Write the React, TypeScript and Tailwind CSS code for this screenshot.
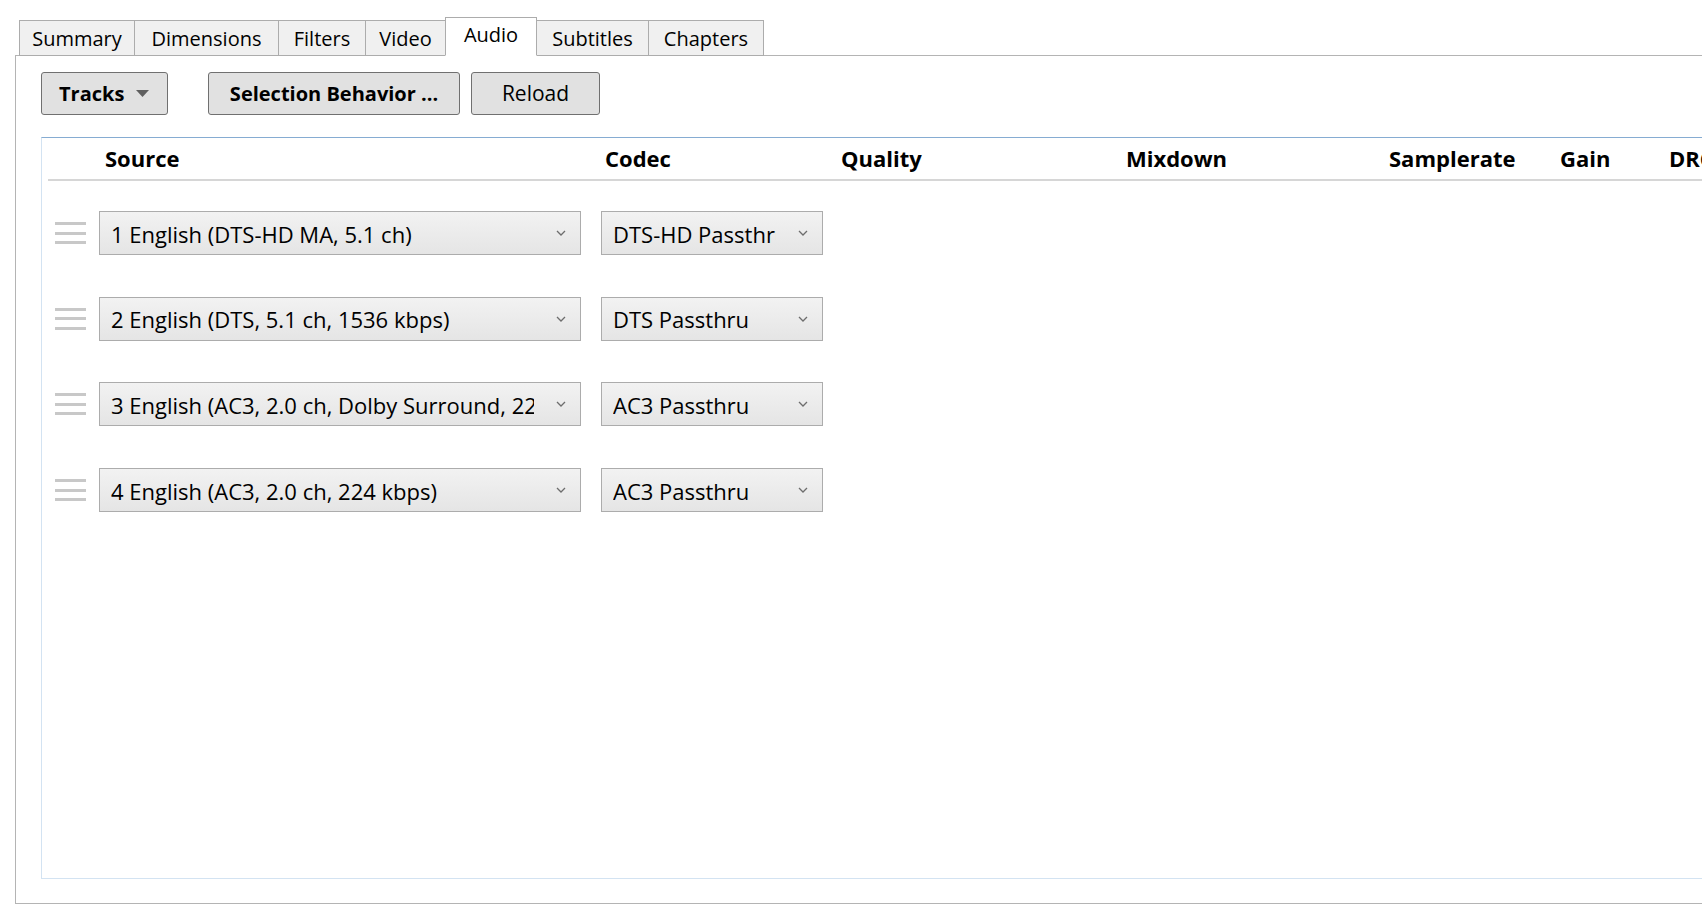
import React from "react";

const tabs = ["Summary", "Dimensions", "Filters", "Video", "Audio", "Subtitles", "Chapters"];
const tabWidths: Record<string, string> = {
  Summary: "w-[115px]",
  Dimensions: "w-[144px]",
  Filters: "w-[87px]",
  Video: "w-[80px]",
  Audio: "w-[92px]",
  Subtitles: "w-[111px]",
  Chapters: "w-[116px]",
};

const tracks = [
  { source: "1 English (DTS-HD MA, 5.1 ch)", codec: "DTS-HD Passthru" },
  { source: "2 English (DTS, 5.1 ch, 1536 kbps)", codec: "DTS Passthru" },
  { source: "3 English (AC3, 2.0 ch, Dolby Surround, 224 kbps)", codec: "AC3 Passthru" },
  { source: "4 English (AC3, 2.0 ch, 224 kbps)", codec: "AC3 Passthru" },
];

function Chevron() {
  return (
    <svg width="10" height="6" viewBox="0 0 10 6" className="shrink-0">
      <path d="M1 1 L5 5 L9 1" fill="none" stroke="#6d6d6d" strokeWidth="1.3" />
    </svg>
  );
}

function Combo({ text, width }: { text: string; width: string }) {
  return (
    <div
      className={`${width} h-[44px] shrink-0 flex items-center border border-[#acacac] bg-gradient-to-b from-[#f2f2f2] to-[#e5e5e5] pl-[11px] pr-[14px]`}
    >
      <span className="flex-1 overflow-hidden whitespace-nowrap text-[22px] leading-[30px] pt-[1px] text-black mr-[22px]">
        {text}
      </span>
      <Chevron />
    </div>
  );
}

function DragHandle() {
  return (
    <div className="w-[31px] shrink-0 flex flex-col gap-[6.5px]">
      <div className="h-[3px] bg-[#c8c8c8]" />
      <div className="h-[3px] bg-[#c8c8c8]" />
      <div className="h-[3px] bg-[#c8c8c8]" />
    </div>
  );
}

export default function App() {
  return (
    <div className="w-[1702px] h-[912px] overflow-hidden bg-white pt-[17px] font-['Open_Sans',sans-serif] text-black">
      <div className="ml-[15px]">
        {/* tab strip */}
        <div className="relative z-10 flex items-end pl-[4px] h-[39px] -mb-px">
          {tabs.map((t, i) => {
            const active = t === "Audio";
            return (
              <div
                key={t}
                className={`${tabWidths[t]} flex items-center justify-center text-[20px] leading-none ${
                  active
                    ? "h-[39px] bg-white border border-b-white border-[#acacac] pb-[3px]"
                    : `h-[36px] bg-[#f0f0f0] border-y border-l border-[#acacac] pt-[2px] ${i === tabs.length - 1 ? "border-r" : ""} ${tabs[i + 1] === "Audio" ? "border-r-0" : ""} ${tabs[i - 1] === "Audio" ? "border-l-0" : ""}`
                }`}
              >
                {t}
              </div>
            );
          })}
        </div>

        {/* panel */}
        <div className="w-[1720px] h-[849px] border border-[#b4b4b4] bg-white pl-[25px] pt-[16px] pb-[24px] flex flex-col">
          <div className="flex items-center h-[43px]">
            <button className="h-[43px] w-[127px] flex items-center pl-[17px] gap-[12px] rounded-[3px] border border-[#707070] bg-[#e1e1e1] text-[20px] font-bold">
              Tracks
              <svg width="13" height="7" viewBox="0 0 13 7">
                <path d="M0 0 H13 L6.5 7 Z" fill="#5f5f5f" />
              </svg>
            </button>
            <button className="ml-[40px] h-[43px] w-[252px] flex items-center justify-center rounded-[3px] border border-[#707070] bg-[#e1e1e1] text-[20px] font-bold">
              Selection Behavior ...
            </button>
            <button className="ml-[11px] h-[43px] w-[129px] flex items-center justify-center rounded-[3px] border border-[#707070] bg-[#e1e1e1] text-[21px]">
              Reload
            </button>
          </div>

          {/* list */}
          <div className="mt-[22px] flex-1 border-t border-t-[#86acd2] border-l border-b border-[#d3e3f2] flex flex-col">
            <div className="ml-[6px] h-[43px] border-b-2 border-[#d6d6d6] flex items-center pl-[57px] text-[22px] font-bold whitespace-nowrap">
              <div className="w-[500px] shrink-0">Source</div>
              <div className="w-[236px] shrink-0">Codec</div>
              <div className="w-[285px] shrink-0">Quality</div>
              <div className="w-[263px] shrink-0">Mixdown</div>
              <div className="w-[171px] shrink-0">Samplerate</div>
              <div className="w-[109px] shrink-0">Gain</div>
              <div className="shrink-0">DRC</div>
            </div>

            <div className="mt-[30px] flex flex-col gap-[41.7px]">
              {tracks.map((t) => (
                <div key={t.source} className="flex items-center pl-[13px]">
                  <DragHandle />
                  <div className="ml-[13px]">
                    <Combo text={t.source} width="w-[482px]" />
                  </div>
                  <div className="ml-[20px]">
                    <Combo text={t.codec} width="w-[222px]" />
                  </div>
                </div>
              ))}
            </div>
          </div>
        </div>
      </div>
    </div>
  );
}
